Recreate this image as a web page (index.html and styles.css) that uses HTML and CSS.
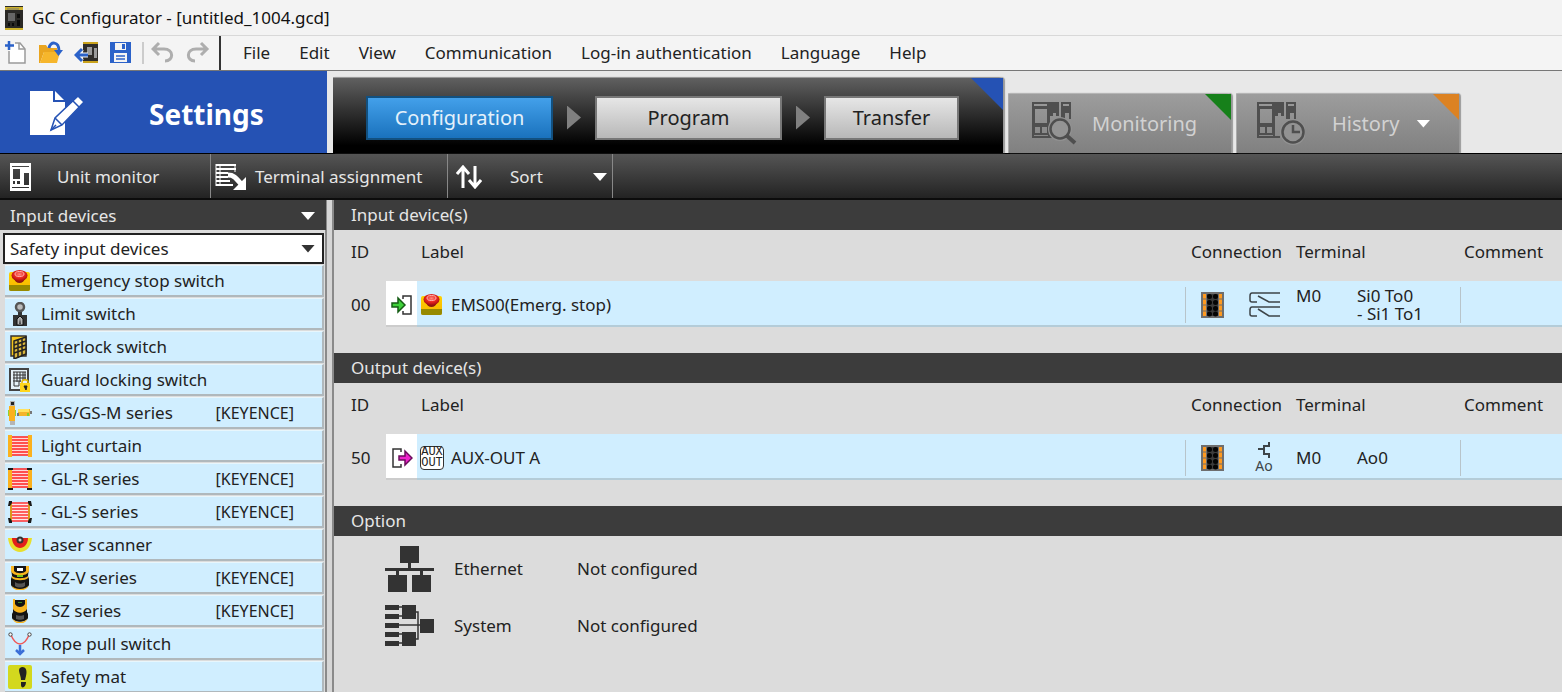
FILE: index.html
```html
<!DOCTYPE html>
<html lang="en">
<head>
    <meta charset="UTF-8">
    <meta name="viewport" content="width=device-width, initial-scale=1.0">
    <title>GC Configurator - [untitled_1004.gcd]</title>
    <link rel="stylesheet" href="styles.css">
</head>
<body>

    <!-- Shared icons -->
    <svg class="sprite" aria-hidden="true">
        <defs>
            <linearGradient id="goldSide" x1="0" y1="0" x2="0" y2="1">
                <stop offset="0" stop-color="#ffd000"/>
                <stop offset="1" stop-color="#f7b500"/>
            </linearGradient>
            <radialGradient id="redCap" cx=".5" cy=".4" r=".6">
                <stop offset="0" stop-color="#ff8a80"/>
                <stop offset=".5" stop-color="#ee2a24"/>
                <stop offset="1" stop-color="#a80f0c"/>
            </radialGradient>
        </defs>
        <symbol id="estop" viewBox="0 0 24 24">
            <rect x="1" y="3" width="21" height="19" rx="2" fill="url(#goldSide)"/>
            <path d="M1 16h21v4a2 2 0 0 1-2 2H3a2 2 0 0 1-2-2z" fill="#978a00"/>
            <ellipse cx="11.500" cy="10" rx="5" ry="4" fill="#8c1a10"/>
            <ellipse cx="11.500" cy="6.500" rx="8" ry="5.500" fill="url(#redCap)"/>
            <ellipse cx="11.500" cy="5" rx="4.500" ry="2.500" fill="none" stroke="#ffb3ac"/>
        </symbol>
        <symbol id="terminal" viewBox="0 0 23 26">
            <rect x="1" y="1" width="21" height="24" fill="#3c3c3c" stroke="#6e6e6e" stroke-width="2"/>
            <path d="M3.500 2v22M19.500 2v22" stroke="#ff9a1f" stroke-width="3"/>
            <path d="M1 7h4M1 13h4M1 19h4M18 7h4M18 13h4M18 19h4M5.500 2v22M17.500 2v22" stroke="#6e6e6e"/>
            <path d="M8.500 4.500v0M8.500 10.500v0M8.500 16.500v0M8.500 22v0M14.500 4.500v0M14.500 10.500v0M14.500 16.500v0M14.500 22v0" stroke="#050505" stroke-width="5" stroke-linecap="round"/>
        </symbol>
        <symbol id="units" viewBox="0 0 44 44">
            <path fill="#4f4f4f" fill-rule="evenodd" d="M0 0h27v14h-3v-3h-3v3h-3v20h5v2H0zM3 7h12v14H3zM3 25h5v6H3zM10 25h5v6h-5zM2 2v2h13V2zM29 0h10v17h-2v-6h-4v6h-4zM31 2v2h6V2zM2 33v1h14v-1z"/>
        </symbol>
    </svg>

    <header class="titlebar">
        <svg width="20" height="24" viewBox="0 0 20 24" aria-hidden="true">
            <rect x="1" y="0" width="18" height="24" fill="#2a2926"/>
            <path d="M1 1h18v3H1zM1 22h18v2H1z" fill="#cdb22c"/>
            <path d="M3 3h12" stroke="#777"/>
            <rect x="4" y="7" width="7" height="8" fill="#666"/>
            <path d="M13 8h3v4h-3zM13 14h3v6h-3zM4 17h2v3H4zM8 17h2v3H8z" fill="#0b0b0b"/>
        </svg>
        <h1>GC Configurator - [untitled_1004.gcd]</h1>
    </header>

    <nav class="menubar">
        <div class="quick-tools">
            <button aria-label="New">
                <svg width="24" height="24" viewBox="0 0 24 24">
                    <path d="M5 10v12h16V8l-5-6h-5" fill="#fff" stroke="#9a9a9a" stroke-width="1.500"/>
                    <path d="M15 2v6h6" fill="none" stroke="#9a9a9a" stroke-width="1.500"/>
                    <path d="M5 0v9M1 4.500h9" stroke="#2b62c9" stroke-width="2.500"/>
                </svg>
            </button>
            <button aria-label="Open">
                <svg width="24" height="24" viewBox="0 0 24 24">
                    <path d="M0 4h7l2 3h9v4H5L1 22H0z" fill="#eaa51f"/>
                    <path d="M5 11h16l-3 11H1z" fill="#f6b62c"/>
                    <path d="M10 7c1-7 10-7 10 3" fill="none" stroke="#2b62c9" stroke-width="3"/>
                    <path d="M15 9h9l-4.500 6z" fill="#2b62c9"/>
                </svg>
            </button>
            <button aria-label="Read from unit">
                <svg width="24" height="24" viewBox="0 0 24 24">
                    <path d="M9 1h15v21H9z" fill="#2f2d2a"/>
                    <path d="M9 1h15v2H9zM9 20h15v2H9z" fill="#c9a21c"/>
                    <path d="M13 6h5v8h-5zM20 7h3v10h-3z" fill="#9b9b9b"/>
                    <path d="M14 14H3M8 8l-6 6 6 6" fill="none" stroke="#f4f4f4" stroke-width="5"/>
                    <path d="M14 14H3M8 8l-6 6 6 6" fill="none" stroke="#2b62c9" stroke-width="3"/>
                </svg>
            </button>
            <button aria-label="Save">
                <svg width="24" height="24" viewBox="0 0 24 24">
                    <path d="M1 1h21v21H1z" fill="#2b62c9"/>
                    <path d="M6 2h11v7H6zM5 12h13v9H5z" fill="#f4f4f4"/>
                    <path d="M13 3h3v5h-3z" fill="#2b62c9"/>
                    <path d="M7 15h9M7 18h9" stroke="#2b62c9" stroke-width="1.500"/>
                </svg>
            </button>
            <span class="divider"></span>
            <button aria-label="Undo">
                <svg width="24" height="24" viewBox="0 0 24 24">
                    <path d="M8 2L2 8l6 6M2 8h11c10 0 10 12 1 12" fill="none" stroke="#aeaeae" stroke-width="3"/>
                </svg>
            </button>
            <button aria-label="Redo">
                <svg width="24" height="24" viewBox="0 0 24 24">
                    <path d="M15 2l6 6-6 6M21 8H10C0 8 0 20 9 20" fill="none" stroke="#aeaeae" stroke-width="3"/>
                </svg>
            </button>
        </div>
        <div class="menus">
            <button>File</button>
            <button>Edit</button>
            <button>View</button>
            <button>Communication</button>
            <button>Log-in authentication</button>
            <button>Language</button>
            <button>Help</button>
        </div>
    </nav>

    <div class="modes">
        <div class="mode-title">
            <svg width="56" height="48" viewBox="0 0 56 48" aria-hidden="true">
                <path d="M1 1h25l10 10v34H1z" fill="#fff"/>
                <path d="M25 1v10h11" fill="none" stroke="#2552b4" stroke-width="2"/>
                <path d="M22 40l4-12L49 6l6 6-22 23z" fill="#fff" stroke="#2552b4" stroke-width="1.500"/>
                <path d="M26 28l7 7M44 11l6 6M22 40l5-5" stroke="#2552b4" stroke-width="1.500"/>
            </svg>
            <h2>Settings</h2>
        </div>
        <div class="steps">
            <button class="step active">Configuration</button>
            <span class="step-arrow"></span>
            <button class="step">Program</button>
            <span class="step-arrow"></span>
            <button class="step short">Transfer</button>
            <span class="corner blue"></span>
        </div>
        <button class="mode">
            <svg width="48" height="44" viewBox="0 0 48 44" aria-hidden="true">
                <use href="#units" width="44" height="44"/>
                <circle cx="28" cy="27" r="12" fill="#929292"/>
                <circle cx="28" cy="27" r="9.500" fill="#949494" stroke="#4f4f4f" stroke-width="2.500"/>
                <path d="M34 33l9 8" stroke="#4f4f4f" stroke-width="4"/>
            </svg>
            <span>Monitoring</span>
            <span class="corner green"></span>
        </button>
        <button class="mode">
            <svg width="48" height="44" viewBox="0 0 48 44" aria-hidden="true">
                <use href="#units" width="44" height="44"/>
                <circle cx="36" cy="30" r="13" fill="#929292"/>
                <circle cx="36" cy="30" r="10.500" fill="#929292" stroke="#4f4f4f" stroke-width="2.500"/>
                <path d="M36 23v7h7" fill="none" stroke="#4f4f4f" stroke-width="2.500"/>
            </svg>
            <span>History</span>
            <i class="caret"></i>
            <span class="corner orange"></span>
        </button>
    </div>

    <div class="toolbar">
        <button class="tool unit">
            <svg width="24" height="28" viewBox="0 0 24 28" aria-hidden="true">
                <path fill="#fff" fill-rule="evenodd" d="M1 0h21v28H1zM3 3v1h17V3zM4 6v10h7V6zM15 10v12h5V10zM4 18v3h2v-3zM8 18v3h3v-3zM3 24v1h17v-1z"/>
            </svg>
            <span>Unit monitor</span>
        </button>
        <button class="tool terminals">
            <svg width="32" height="28" viewBox="0 0 32 28" aria-hidden="true">
                <path d="M1 2h20M1 6h20M1 10h12M1 14h12M1 18h14M1 22h17" stroke="#fff" stroke-width="2"/>
                <path d="M1 1v22M5 1v22M20 1v8" stroke="#fff"/>
                <path d="M13 12c6 0 8 3 13 9" fill="none" stroke="#fff" stroke-width="5"/>
                <path d="M31 14v13H18z" fill="#fff"/>
            </svg>
            <span>Terminal assignment</span>
        </button>
        <button class="tool sort">
            <svg width="26" height="24" viewBox="0 0 26 24" aria-hidden="true">
                <path d="M7 23V3M1 9l6-7 6 7M19 1v20M13 15l6 7 6-7" fill="none" stroke="#fff" stroke-width="3"/>
            </svg>
            <span>Sort</span>
            <i class="caret"></i>
        </button>
    </div>

    <div class="workspace">
        <aside class="sidebar">
            <button class="sidebar-head">Input devices <i class="caret"></i></button>
            <label class="category">
                <select aria-label="Device category">
                    <option>Safety input devices</option>
                </select>
                <i class="caret"></i>
            </label>
            <ul class="devices">
                <li><button>
                    <svg width="24" height="24"><use href="#estop"/></svg>
                    <span>Emergency stop switch</span>
                </button></li>
                <li><button>
                    <svg width="24" height="24" viewBox="0 0 24 24">
                        <path d="M10 6h4v8h-4zM5 13h14v11H5z" fill="#333"/>
                        <circle cx="12" cy="5" r="4" fill="#bbb" stroke="#555" stroke-width="2.500"/>
                        <path d="M9 23v-6l3-3 3 3v6z" fill="#b8b8b8" stroke="#111"/>
                        <path d="M12 16l-1 6h2z" fill="#444"/>
                    </svg>
                    <span>Limit switch</span>
                </button></li>
                <li><button>
                    <svg width="24" height="24" viewBox="0 0 24 24">
                        <path d="M3 1h15v20H3z" fill="#f3c51b" stroke="#333" stroke-width="1.500"/>
                        <path d="M6 6l12-4v17L6 24z" fill="#d9b63c" stroke="#222" stroke-width="1.500"/>
                        <path d="M10 5v18M14 4v17M6 10l12-4M6 14l12-4M6 18l12-4" stroke="#222" stroke-width="1.500"/>
                    </svg>
                    <span>Interlock switch</span>
                </button></li>
                <li><button>
                    <svg width="24" height="24" viewBox="0 0 24 24">
                        <path d="M2 1h18v21H2z" fill="#e6f2f8" stroke="#444" stroke-width="2"/>
                        <path d="M5 4h13M5 7h13M5 10h13M5 13h8M6 4v14M9 4v10M12 4v10M15 4v8M17 4v8M6 18h5v-5" fill="none" stroke="#333"/>
                        <path d="M14 16v-2c0-3 6-3 6 0v2" fill="none" stroke="#e5b800" stroke-width="1.500"/>
                        <path d="M12 15h10v9H12z" fill="#ffd51c"/>
                        <path d="M16 18h3l-1 4z" stroke="#222" fill="#222"/>
                    </svg>
                    <span>Guard locking switch</span>
                </button></li>
                <li><button>
                    <svg width="24" height="24" viewBox="0 0 24 24">
                        <path d="M0 9h8v6H0z" fill="#93d12c"/>
                        <path d="M2 0h5v24H2z" fill="#b5b5b5"/>
                        <path d="M1 5h6v15H1z" fill="#fbb11e"/>
                        <path d="M3 1h3v3H3z" fill="#222"/>
                        <path d="M10 8h12v7H10z" fill="#f4b42c"/>
                        <path d="M10 8h11v3H10z" fill="#ffe25e"/>
                        <path d="M9 12h2v3H9zM22 10h2v3h-2z" fill="#777"/>
                        <path d="M19 12h2v3h-2z" fill="#8acb28"/>
                    </svg>
                    <span>- GS/GS-M series</span><small>[KEYENCE]</small>
                </button></li>
                <li><button>
                    <svg width="24" height="24" viewBox="0 0 24 24">
                        <path d="M4 3h16v18H4z" fill="#ffd9d9"/>
                        <path d="M4 3h16M4 6h16M4 9h16M4 12h16M4 15h16M4 18h16M4 21h16" stroke="#f22" stroke-width="1.500"/>
                        <path d="M0 1h4v22H0zM20 1h4v22h-4z" fill="#fbb11e"/>
                    </svg>
                    <span>Light curtain</span>
                </button></li>
                <li><button>
                    <svg width="24" height="24" viewBox="0 0 24 24">
                        <path d="M4 3h16v18H4z" fill="#ffd9d9"/>
                        <path d="M4 2h16M4 5h16M4 8h16M4 11h16M4 14h16M4 17h16M4 20h16" stroke="#f22" stroke-width="1.500"/>
                        <path d="M0 2h4v20H0zM20 2h4v20h-4z" fill="#fbb11e"/>
                        <path d="M0 3V1h5v2zM24 3V1h-5v2zM0 21v2h5v-2zM24 21v2h-5v-2z" fill="#1a1a1a"/>
                    </svg>
                    <span>- GL-R series</span><small>[KEYENCE]</small>
                </button></li>
                <li><button>
                    <svg width="24" height="24" viewBox="0 0 24 24">
                        <path d="M4 3h16v18H4z" fill="#ffe6e6"/>
                        <path d="M4 3h16M4 6h16M4 9h16M4 12h16M4 15h16M4 18h16M4 21h16" stroke="#f33" stroke-width="1.500"/>
                        <path d="M2 3h2v18H2zM20 3h2v18h-2z" fill="#d99a1c"/>
                        <path d="M0 6l1-5h3v2L2 6zM24 6l-1-5h-3v2l2 3zM0 18l1 5h3v-2l-2-3zM24 18l-1 5h-3v-2l2-3z" fill="#1a1a1a"/>
                    </svg>
                    <span>- GL-S series</span><small>[KEYENCE]</small>
                </button></li>
                <li><button>
                    <svg width="24" height="24" viewBox="0 0 24 24">
                        <path d="M0 5h24c-1 9-6 14-12 14S1 14 0 5z" fill="#e8df2c"/>
                        <path d="M4 5h16c0 6-4 10-8 10S4 11 4 5z" fill="#e3201b"/>
                        <circle cx="12" cy="7" r="3.500" fill="#333"/>
                        <circle cx="12" cy="7" r="1.500" fill="#ccc"/>
                    </svg>
                    <span>Laser scanner</span>
                </button></li>
                <li><button>
                    <svg width="24" height="24" viewBox="0 0 24 24">
                        <path d="M3 1c4-2 14-2 18 0l-1 9 1 3v6c-2 6-16 6-18 0v-6l1-3z" fill="#141414"/>
                        <path d="M3 0h3v5c3 3 9 3 12 0V0h3v5c-2 6-16 6-18 0z" fill="#f9b51f"/>
                        <path d="M9 2h6v3H9z" fill="#fff"/>
                        <path d="M4 10c3 3 13 3 16 0v2c-3 3-13 3-16 0z" fill="#f9b51f"/>
                        <path d="M9 9h6v2H9z" fill="#77c51d"/>
                        <path d="M7 16c3 2 7 2 10 0v4c-3 2-7 2-10 0z" fill="#555"/>
                        <path d="M4 20c3 4 13 4 16 0-1 6-15 6-16 0z" fill="#f9b51f"/>
                    </svg>
                    <span>- SZ-V series</span><small>[KEYENCE]</small>
                </button></li>
                <li><button>
                    <svg width="24" height="24" viewBox="0 0 24 24">
                        <path d="M5 1h14v12l1 2v4c-2 5-14 5-16 0v-4l1-2z" fill="#141414"/>
                        <path d="M5 0h2v5c2 4 8 4 10 0V0h2v10c-3 5-11 5-14 0z" fill="#f9b51f"/>
                        <path d="M10 3h4v1h-4z" fill="#3c8a1d"/>
                        <path d="M8 16c2 1 6 1 8 0v4c-2 1-6 1-8 0z" fill="#555"/>
                        <path d="M5 20c3 4 11 4 14 0-1 6-13 6-14 0z" fill="#f9b51f"/>
                    </svg>
                    <span>- SZ series</span><small>[KEYENCE]</small>
                </button></li>
                <li><button>
                    <svg width="24" height="24" viewBox="0 0 24 24">
                        <path d="M3 3c5 12 13 12 18 0" fill="none" stroke="#f05a5a" stroke-width="1.500"/>
                        <circle cx="2.500" cy="2.500" r="1.700" fill="#fff" stroke="#444"/>
                        <circle cx="21.500" cy="2.500" r="1.700" fill="#fff" stroke="#444"/>
                        <path d="M12 13v9M8 18l4 4 4-4" fill="none" stroke="#3a6fd8" stroke-width="2.500"/>
                    </svg>
                    <span>Rope pull switch</span>
                </button></li>
                <li><button>
                    <svg width="24" height="24" viewBox="0 0 24 24">
                        <rect width="24" height="24" rx="2" fill="#d3d81e"/>
                        <path d="M14 2c5 0 5 5 4 9l-1 4h-4c0-5-5-12 1-13zM13 17h5c0 6-5 7-5 3z" fill="#222"/>
                    </svg>
                    <span>Safety mat</span>
                </button></li>
            </ul>
        </aside>

        <main class="main">
            <section>
                <h3>Input device(s)</h3>
                <table>
                    <colgroup>
                        <col class="c-id"><col class="c-dir"><col><col class="c-conn"><col class="c-term"><col class="c-note">
                    </colgroup>
                    <thead>
                        <tr><th>ID</th><th></th><th>Label</th><th>Connection</th><th>Terminal</th><th>Comment</th></tr>
                    </thead>
                    <tbody>
                        <tr>
                            <td>00</td>
                            <td>
                                <svg width="22" height="20" viewBox="0 0 22 20" aria-label="Input">
                                    <path d="M12 4V1h8v18h-8v-3" fill="none" stroke="#333" stroke-width="1.500"/>
                                    <path d="M1 8h6V3l7 7-7 7v-5H1z" fill="#3fd13a" stroke="#155c14" stroke-width="1.500"/>
                                </svg>
                            </td>
                            <td>
                                <div class="label">
                                    <svg width="24" height="24" aria-hidden="true"><use href="#estop"/></svg>
                                    <span>EMS00(Emerg. stop)</span>
                                </div>
                            </td>
                            <td>
                                <div class="conn">
                                    <svg width="23" height="26" aria-hidden="true"><use href="#terminal"/></svg>
                                    <svg width="32" height="26" viewBox="0 0 32 26" aria-hidden="true">
                                        <path d="M31 1H3Q1 1 1 4v4q0 2 2 2h5M9 4l11 6h11M31 15H3q-2 0-2 3v4q0 2 2 2h5M9 17l11 7h11" fill="none" stroke="#3d4448" stroke-width="1.500"/>
                                    </svg>
                                </div>
                            </td>
                            <td>
                                <div class="term">
                                    <span>M0</span>
                                    <span>Si0 To0<br>- Si1 To1</span>
                                </div>
                            </td>
                            <td><div class="note"></div></td>
                        </tr>
                    </tbody>
                </table>
            </section>

            <section>
                <h3>Output device(s)</h3>
                <table>
                    <colgroup>
                        <col class="c-id"><col class="c-dir"><col><col class="c-conn"><col class="c-term"><col class="c-note">
                    </colgroup>
                    <thead>
                        <tr><th>ID</th><th></th><th>Label</th><th>Connection</th><th>Terminal</th><th>Comment</th></tr>
                    </thead>
                    <tbody>
                        <tr>
                            <td>50</td>
                            <td>
                                <svg width="22" height="20" viewBox="0 0 22 20" aria-label="Output">
                                    <path d="M10 4V1H2v18h8v-3" fill="none" stroke="#333" stroke-width="1.500"/>
                                    <path d="M8 8h6V3l7 7-7 7v-5H8z" fill="#ee22cc" stroke="#6b0d5c" stroke-width="1.500"/>
                                </svg>
                            </td>
                            <td>
                                <div class="label">
                                    <span class="aux">AUX<br>OUT</span>
                                    <span>AUX-OUT A</span>
                                </div>
                            </td>
                            <td>
                                <div class="conn">
                                    <svg width="23" height="26" aria-hidden="true"><use href="#terminal"/></svg>
                                    <span class="aux-conn">
                                        <svg width="14" height="16" viewBox="0 0 14 16" aria-hidden="true">
                                            <path d="M12 0v4H7v8h5v4M1 7h6" fill="none" stroke="#3d4448" stroke-width="2"/>
                                        </svg>
                                        Ao
                                    </span>
                                </div>
                            </td>
                            <td>
                                <div class="term">
                                    <span>M0</span>
                                    <span>Ao0</span>
                                </div>
                            </td>
                            <td><div class="note"></div></td>
                        </tr>
                    </tbody>
                </table>
            </section>

            <section>
                <h3>Option</h3>
                <dl class="options">
                    <div class="option">
                        <svg width="49" height="46" viewBox="0 0 49 46" aria-hidden="true">
                            <path d="M15 0h19v17H15zM3 29h19v17H3zM27 29h19v17H27zM0 22h49v3H0zM23 17h3v5h-3zM11 25h3v4h-3zM35 25h3v4h-3z" fill="#333"/>
                        </svg>
                        <dt>Ethernet</dt>
                        <dd>Not configured</dd>
                    </div>
                    <div class="option">
                        <svg width="49" height="42" viewBox="0 0 49 42" aria-hidden="true">
                            <path d="M0 0h14v5H0zM0 9h14v5H0zM0 18h14v5H0zM0 27h14v5H0zM0 36h14v5H0zM17 0h14v14H17zM17 27h14v14H17zM35 14h14v14H35z" fill="#333"/>
                            <path d="M14 2h4M14 11h4M14 20h22M14 29h4M14 38h4M30 7h3v27h-3" fill="none" stroke="#333" stroke-width="1.500"/>
                        </svg>
                        <dt>System</dt>
                        <dd>Not configured</dd>
                    </div>
                </dl>
            </section>
        </main>
    </div>

</body>
</html>
```
FILE: styles.css
```css
* {
    box-sizing: border-box;
}

body {
    font-family: 'Noto Sans', 'Open Sans', sans-serif;
    font-size: 17px;
    line-height: 24px;
    color: #222;
    background: #dcdcdc;
    display: flex;
    flex-direction: column;
    height: 100vh;
    margin: 0;
    overflow: hidden;
}

h1, h2, h3, ul, dl, dd {
    margin: 0;
    padding: 0;
    font-weight: 400;
}

button, select {
    font: inherit;
    color: inherit;
    background: none;
    border: none;
    padding: 0;
    cursor: pointer;
}

svg {
    display: block;
    flex: none;
}

.sprite {
    position: absolute;
    width: 0;
    height: 0;
}

.caret {
    width: 14px;
    height: 8px;
    background: #fff;
    clip-path: polygon(0 0, 100% 0, 50% 100%);
}

/* Title and menus */
.titlebar {
    display: flex;
    align-items: center;
    gap: 8px;
    height: 35px;
    padding-left: 4px;
    background: #f3f3f3;
    color: #111;
}

.titlebar h1 {
    font-size: 17px;
}

.menubar {
    display: flex;
    height: 36px;
    background: #f4f4f4;
    border-top: 1px solid #d8d8d8;
    border-bottom: 1px solid #777;
}

.quick-tools {
    display: flex;
    align-items: center;
    gap: 11px;
    width: 221px;
    padding-left: 4px;
    border-right: 2px solid #333;
}

.quick-tools .divider {
    width: 2px;
    height: 22px;
    background: #ccc;
    margin-left: -2px;
    margin-right: -4px;
}

.menus {
    display: flex;
    gap: 29px;
    padding-left: 22px;
}

/* Mode tabs */
.modes {
    display: flex;
    align-items: flex-end;
    height: 83px;
    background: #e8e8e8;
    border-bottom: 1px solid #000;
}

.mode-title {
    display: flex;
    align-items: center;
    gap: 64px;
    width: 327px;
    height: 82px;
    padding: 4px 0 0 29px;
    margin-right: 6px;
    background: #2552b4;
    color: #fff;
}

.mode-title h2 {
    font-size: 28px;
    font-weight: 700;
    line-height: 36px;
}

.steps {
    position: relative;
    display: flex;
    align-items: center;
    gap: 14px;
    width: 670px;
    height: 76px;
    padding: 4px 0 0 33px;
    margin-right: 5px;
    background: linear-gradient(#606060, #000 90%);
    border-top: 1px solid #999;
    border-radius: 0 4px 0 0;
    box-shadow: 2px 0 1px #999;
}

.step {
    width: 187px;
    height: 44px;
    font-size: 20px;
    background: linear-gradient(#e6e6e6, #b8b8b8);
    border: 2px solid #777;
}

.step.short {
    width: 135px;
}

.step.active {
    color: #e4f1fb;
    background: linear-gradient(#43a0ea, #1a72bd);
    border-color: #12507f;
}

.step-arrow {
    width: 14px;
    height: 24px;
    background: #808080;
    clip-path: polygon(0 0, 100% 50%, 0 100%);
}

.corner {
    position: absolute;
    top: 0;
    right: 0;
    width: 26px;
    height: 26px;
    clip-path: polygon(0 0, 100% 0, 100% 100%);
}

.corner.blue {
    width: 32px;
    height: 32px;
    background: #2552b4;
}

.corner.green {
    background: #16801a;
}

.corner.orange {
    background: #dc8222;
}

.mode {
    position: relative;
    display: flex;
    align-items: center;
    gap: 12px;
    width: 223px;
    height: 60px;
    padding-left: 23px;
    margin-right: 5px;
    font-size: 20px;
    color: #d2d2d2;
    background: linear-gradient(#9d9d9d, #808080);
    border-top: 1px solid #b5b5b5;
    border-left: 1px solid #aaa;
    border-radius: 0 4px 0 0;
    box-shadow: 2px 0 1px #999;
}

.mode + .mode {
    padding-left: 20px;
    gap: 17px;
}

.mode + .mode svg {
    margin-right: 10px;
}

/* Toolbar */
.toolbar {
    display: flex;
    height: 46px;
    background: linear-gradient(#555, #232323);
    border-bottom: 2px solid #0c0c0c;
}

.tool {
    display: flex;
    align-items: center;
    padding-top: 2px;
    color: #e6e6e6;
    border-right: 1px solid #888;
}

.tool.unit {
    gap: 24px;
    width: 211px;
    padding-left: 9px;
}

.tool.terminals {
    gap: 8px;
    width: 237px;
    padding-left: 4px;
}

.tool.sort {
    gap: 28px;
    width: 165px;
    padding-left: 8px;
    padding-right: 5px;
}

.tool.sort .caret {
    margin-left: auto;
}

/* Sidebar */
.workspace {
    display: flex;
    flex: 1;
    min-height: 0;
}

.sidebar {
    display: flex;
    flex-direction: column;
    width: 334px;
    flex: none;
    overflow: hidden;
    border-right: 2px solid #8a8a8a;
    box-shadow: inset -5px 0 #d6d6d6, inset -7px 0 #8a8a8a;
}

.sidebar-head {
    display: flex;
    align-items: center;
    justify-content: space-between;
    height: 30px;
    flex: none;
    padding: 2px 11px 0 10px;
    margin-right: 6px;
    color: #e6e6e6;
    background: #3c3c3c;
}

.category {
    display: grid;
    align-items: center;
    height: 31px;
    flex: none;
    margin: 3px 8px 1px 3px;
    background: #fff;
    border: 2px solid #222;
}

.category select {
    grid-area: 1 / 1;
    appearance: none;
    height: 27px;
    padding-left: 5px;
}

.category .caret {
    grid-area: 1 / 1;
    justify-self: end;
    margin-right: 7px;
    background: #333;
    pointer-events: none;
}

.devices {
    list-style: none;
    padding: 0 8px 0 5px;
}

.devices button {
    display: flex;
    align-items: center;
    gap: 9px;
    width: 100%;
    height: 32px;
    margin-bottom: 1px;
    padding-left: 3px;
    text-align: left;
    background: #d0eeff;
    border-top: 1px solid #e8f6fc;
    border-right: 2px solid #b0b8bc;
    border-bottom: 2px solid #b0b8bc;
}

.devices small {
    font-size: 16px;
    margin-left: auto;
    margin-right: 28px;
}

/* Device tables */
.main {
    flex: 1;
    min-width: 0;
    overflow: hidden;
}

.main h3 {
    height: 30px;
    padding-left: 17px;
    font-size: 17px;
    line-height: 29px;
    color: #e6e6e6;
    background: #3c3c3c;
}

table {
    width: 100%;
    table-layout: fixed;
    border-collapse: collapse;
    margin-bottom: 26px;
}

.c-id {
    width: 52px;
}

.c-dir {
    width: 31px;
}

.c-conn {
    width: 111px;
}

.c-term {
    width: 164px;
}

.c-note {
    width: 102px;
}

th {
    height: 51px;
    padding: 0 0 8px 4px;
    font-weight: 400;
    text-align: left;
    white-space: nowrap;
}

td {
    height: 45px;
    padding: 3px 0 0;
    background: #d0eeff;
    border-bottom: 2px solid #b4ccd8;
}

th:first-child, td:first-child {
    padding-left: 17px;
}

th:nth-child(4) {
    padding-left: 6px;
}

th:nth-child(5) {
    padding-left: 0;
}

td:first-child {
    background: none;
    border: none;
}

td:nth-child(2) {
    padding-left: 5px;
    background: #fff;
    border-color: #ccc;
}

.label {
    display: flex;
    align-items: center;
    gap: 7px;
    padding-left: 3px;
}

.aux {
    width: 24px;
    height: 24px;
    font-family: 'Liberation Mono', monospace;
    font-size: 12px;
    line-height: 11px;
    text-align: center;
    background: #fff;
    border: 1px solid #333;
    border-radius: 4px;
}

.conn {
    display: flex;
    align-items: center;
    gap: 25px;
    height: 36px;
    padding-left: 15px;
    border-left: 1px solid #b8c4ca;
}

.aux-conn {
    display: flex;
    flex-direction: column;
    align-items: center;
    width: 30px;
    font-size: 14px;
    line-height: 16px;
    color: #3d4448;
}

.term {
    display: flex;
    line-height: 18px;
}

.term span:first-child {
    width: 61px;
}

.note {
    height: 36px;
    border-left: 1px solid #b8c4ca;
}

/* Options */
.options {
    padding: 4px 0 0 51px;
}

.option {
    display: flex;
    align-items: center;
    height: 57px;
}

.option dt {
    width: 123px;
    margin-left: 20px;
}
```
